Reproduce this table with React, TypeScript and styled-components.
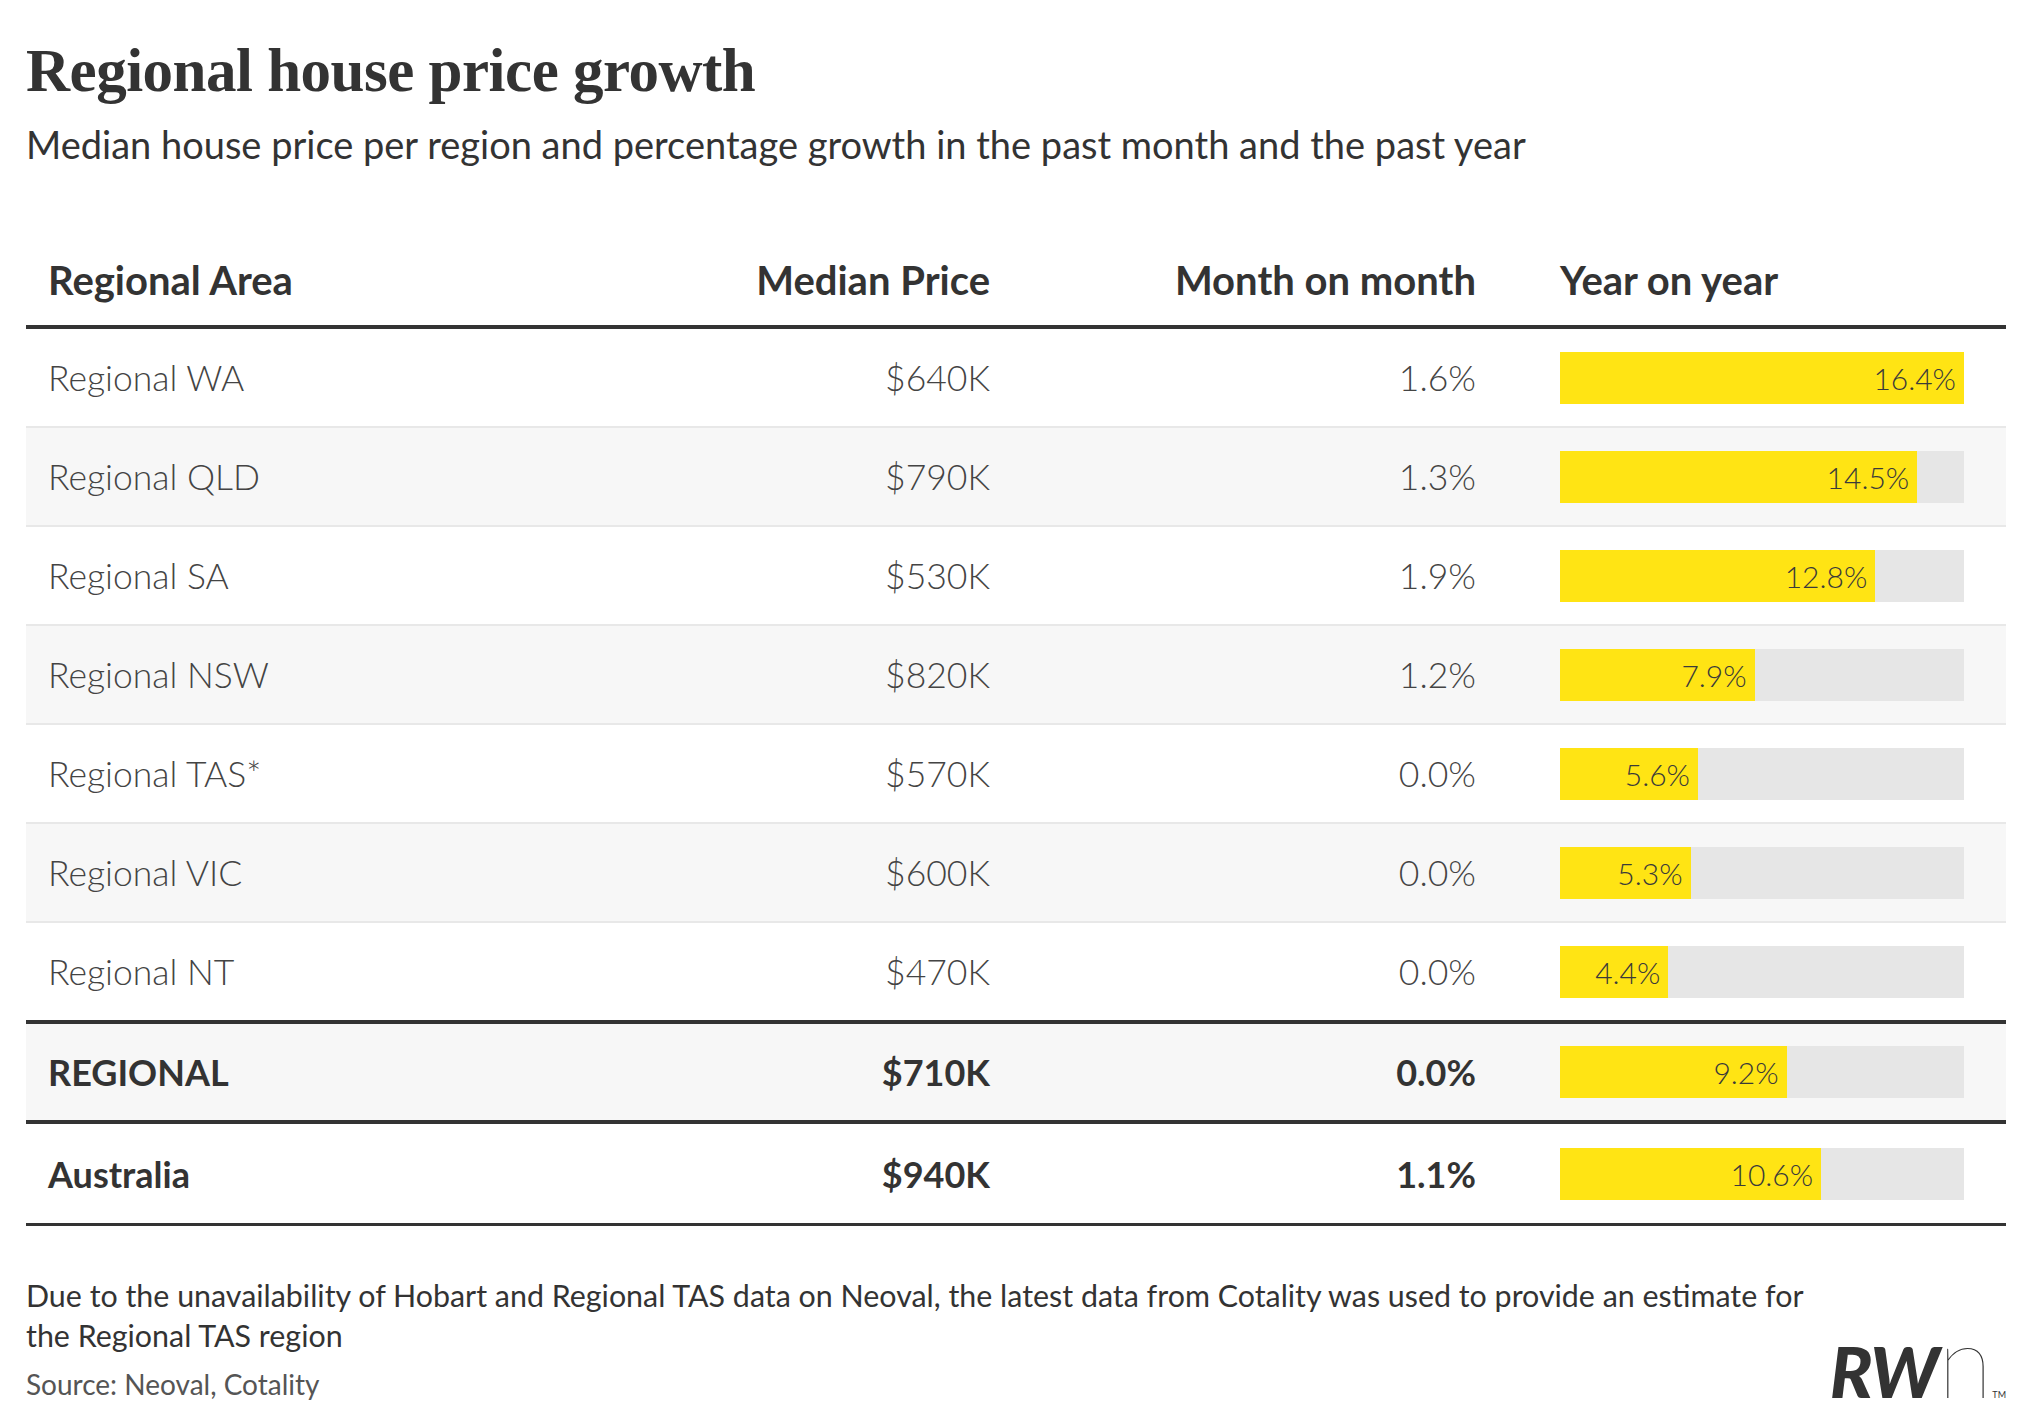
import React from "react";
import styled, { createGlobalStyle } from "styled-components";

const GlobalStyle = createGlobalStyle`
  html, body {
    margin: 0;
    padding: 0;
    background: #ffffff;
  }
  body {
    font-family: Lato, "Noto Sans", sans-serif;
    color: #333333;
  }
`;

type Region = {
  name: string;
  price: string;
  month: string;
  year: number;
};

const regions: Region[] = [
  { name: "Regional WA", price: "$640K", month: "1.6%", year: 16.4 },
  { name: "Regional QLD", price: "$790K", month: "1.3%", year: 14.5 },
  { name: "Regional SA", price: "$530K", month: "1.9%", year: 12.8 },
  { name: "Regional NSW", price: "$820K", month: "1.2%", year: 7.9 },
  { name: "Regional TAS*", price: "$570K", month: "0.0%", year: 5.6 },
  { name: "Regional VIC", price: "$600K", month: "0.0%", year: 5.3 },
  { name: "Regional NT", price: "$470K", month: "0.0%", year: 4.4 },
];

const totals: Region[] = [
  { name: "REGIONAL", price: "$710K", month: "0.0%", year: 9.2 },
  { name: "Australia", price: "$940K", month: "1.1%", year: 10.6 },
];

const MAX_YEAR = 16.4;
const BAR_WIDTH = 404;

const Page = styled.div`
  width: 2032px;
  box-sizing: border-box;
  padding: 40px 26px 0 26px;
`;

const Title = styled.h1`
  margin: 0;
  font-family: "Liberation Serif", "DejaVu Serif", serif;
  font-weight: 700;
  font-size: 61px;
  line-height: 1;
  color: #333333;
  letter-spacing: -0.5px;
`;

const Subtitle = styled.p`
  margin: 24px 0 0 0;
  font-family: Lato, sans-serif;
  font-weight: 400;
  font-size: 38px;
  line-height: 1;
  color: #333333;
`;

const Table = styled.div`
  margin-top: 97px;
  width: 1980px;
`;

const gridCols = `
  display: grid;
  grid-template-columns: 500px 442px 486px 1fr;
  padding-left: 22px;
  box-sizing: border-box;
`;

const HeaderRow = styled.div`
  ${gridCols};
  align-items: end;
  padding-bottom: 25px;
  border-bottom: 4px solid #333333;
`;

const HeadCell = styled.div<{ $align?: "left" | "right"; $indent?: boolean }>`
  font-family: Lato, sans-serif;
  font-weight: 700;
  font-size: 40px;
  line-height: 1;
  color: #333333;
  text-align: ${(p) => p.$align ?? "left"};
  padding-left: ${(p) => (p.$indent ? "84px" : "0")};
  white-space: nowrap;
`;

const Row = styled.div<{ $shade: boolean; $last?: boolean }>`
  ${gridCols};
  align-items: center;
  height: ${(p) => (p.$last ? "97px" : "99px")};
  background: ${(p) => (p.$shade ? "#f7f7f7" : "#ffffff")};
  border-bottom: ${(p) => (p.$last ? "none" : "2px solid #e8e8e8")};
`;

const TotalRow = styled.div<{ $shade: boolean; $top?: boolean; $bottom: number }>`
  ${gridCols};
  align-items: center;
  height: ${(p) => (p.$top ? "104px" : "102px")};
  background: ${(p) => (p.$shade ? "#f7f7f7" : "#ffffff")};
  border-top: ${(p) => (p.$top ? "4px solid #333333" : "none")};
  border-bottom: ${(p) => `${p.$bottom}px solid #333333`};
`;

const Cell = styled.div<{ $align?: "left" | "right"; $bold?: boolean }>`
  font-family: Lato, sans-serif;
  font-weight: ${(p) => (p.$bold ? 700 : 300)};
  font-size: ${(p) => (p.$bold ? "36px" : "35.5px")};
  line-height: 1;
  color: ${(p) => (p.$bold ? "#333333" : "#444444")};
  text-align: ${(p) => p.$align ?? "left"};
  white-space: nowrap;
`;

const BarCell = styled.div`
  padding-left: 84px;
`;

const BarTrack = styled.div`
  width: ${BAR_WIDTH}px;
  height: 52px;
  background: #e6e6e6;
  display: flex;
`;

const BarFill = styled.div`
  height: 100%;
  background: #ffe414;
  display: flex;
  align-items: center;
  justify-content: flex-end;
  padding-right: 8px;
  box-sizing: border-box;
  font-family: Lato, sans-serif;
  font-weight: 300;
  font-size: 30px;
  color: #3a3a3a;
  white-space: nowrap;
`;

const Footer = styled.div`
  margin-top: 49px;
  display: flex;
  justify-content: space-between;
  align-items: flex-end;
  width: 1980px;
`;

const Notes = styled.div`
  max-width: 1800px;
`;

const Note = styled.p`
  margin: 0;
  font-family: Lato, sans-serif;
  font-weight: 400;
  font-size: 30.4px;
  line-height: 40px;
  color: #333333;
`;

const Source = styled.p`
  margin: 9px 0 0 0;
  font-family: Lato, sans-serif;
  font-weight: 400;
  font-size: 28px;
  line-height: 40px;
  color: #555555;
`;

const Logo = styled.div`
  display: flex;
  align-items: baseline;
  color: #333333;
  font-family: Lato, sans-serif;
  line-height: 1;
  margin-bottom: -2px;
`;

const LogoBold = styled.span`
  font-weight: 900;
  font-style: italic;
  font-size: 71px;
  letter-spacing: -1.5px;
`;

const LogoThin = styled.span`
  font-weight: 200;
  font-size: 100px;
  line-height: 0.72;
  margin-left: 0;
`;

const LogoTm = styled.span`
  font-weight: 400;
  font-size: 9px;
  margin-left: 0;
`;

function Bar({ value }: { value: number }) {
  const width = (value / MAX_YEAR) * BAR_WIDTH;
  return (
    <BarCell>
      <BarTrack>
        <BarFill style={{ width: `${width}px` }}>{value.toFixed(1)}%</BarFill>
      </BarTrack>
    </BarCell>
  );
}

export default function App() {
  return (
    <>
      <GlobalStyle />
      <Page>
        <Title>Regional house price growth</Title>
        <Subtitle>
          Median house price per region and percentage growth in the past month and the past year
        </Subtitle>
        <Table>
          <HeaderRow>
            <HeadCell>Regional Area</HeadCell>
            <HeadCell $align="right">Median Price</HeadCell>
            <HeadCell $align="right">Month on month</HeadCell>
            <HeadCell $indent>Year on year</HeadCell>
          </HeaderRow>
          {regions.map((r, i) => (
            <Row key={r.name} $shade={i % 2 === 1} $last={i === regions.length - 1}>
              <Cell>{r.name}</Cell>
              <Cell $align="right">{r.price}</Cell>
              <Cell $align="right">{r.month}</Cell>
              <Bar value={r.year} />
            </Row>
          ))}
          <TotalRow $shade $top $bottom={4}>
            <Cell $bold>{totals[0].name}</Cell>
            <Cell $bold $align="right">{totals[0].price}</Cell>
            <Cell $bold $align="right">{totals[0].month}</Cell>
            <Bar value={totals[0].year} />
          </TotalRow>
          <TotalRow $shade={false} $bottom={3}>
            <Cell $bold>{totals[1].name}</Cell>
            <Cell $bold $align="right">{totals[1].price}</Cell>
            <Cell $bold $align="right">{totals[1].month}</Cell>
            <Bar value={totals[1].year} />
          </TotalRow>
        </Table>
        <Footer>
          <Notes>
            <Note>
              Due to the unavailability of Hobart and Regional TAS data on Neoval, the latest data from Cotality was used to provide an estimate for the Regional TAS region
            </Note>
            <Source>Source: Neoval, Cotality</Source>
          </Notes>
          <Logo>
            <LogoBold>RW</LogoBold>
            <LogoThin>n</LogoThin>
            <LogoTm>TM</LogoTm>
          </Logo>
        </Footer>
      </Page>
    </>
  );
}
